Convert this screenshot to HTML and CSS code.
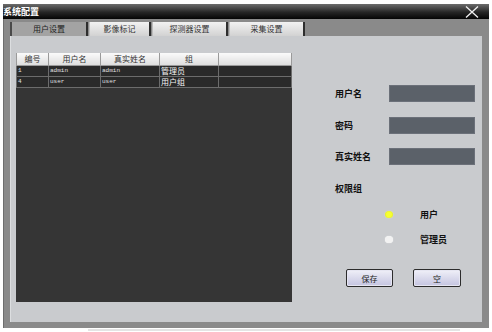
FILE: index.html
```html
<!DOCTYPE html>
<html lang="zh">
<head>
    <meta charset="UTF-8">
    <title>系统配置</title>
    <link rel="stylesheet" href="styles.css">
</head>
<body>
    <div class="window">
        <div class="titlebar">
            <span class="title">系统配置</span>
            <svg class="close" width="14" height="12" viewBox="0 0 14 12">
                <path d="M1 0.5 L13 11.5 M13 0.5 L1 11.5" stroke="#f2f2f2" stroke-width="1.3" fill="none"/>
            </svg>
        </div>
        <div class="frame">
            <div class="tabs">
                <div class="tab active">用户设置</div>
                <div class="tab">影像标记</div>
                <div class="tab">探测器设置</div>
                <div class="tab">采集设置</div>
            </div>
            <div class="panel">
                <div class="list">
                    <table id="user-table">
                        <thead>
                            <tr>
                                <th class="c-id">编号</th>
                                <th class="c-name">用户名</th>
                                <th class="c-real">真实姓名</th>
                                <th class="c-group">组</th>
                                <th></th>
                            </tr>
                        </thead>
                        <tbody>
                            <tr>
                                <td class="mono">1</td>
                                <td class="mono">admin</td>
                                <td class="mono">admin</td>
                                <td>管理员</td>
                                <td></td>
                            </tr>
                            <tr>
                                <td class="mono">4</td>
                                <td class="mono">user</td>
                                <td class="mono">user</td>
                                <td>用户组</td>
                                <td></td>
                            </tr>
                        </tbody>
                    </table>
                </div>
                <div class="form">
                    <div class="fields">
                        <label>用户名</label><div class="input"></div>
                        <label>密码</label><div class="input"></div>
                        <label>真实姓名</label><div class="input"></div>
                    </div>
                    <div class="group-label">权限组</div>
                    <div class="radio-row"><span class="dot on"></span><span class="radio-text">用户</span></div>
                    <div class="radio-row"><span class="dot"></span><span class="radio-text">管理员</span></div>
                    <div class="buttons">
                        <button class="btn">保存</button>
                        <button class="btn wide">空</button>
                    </div>
                </div>
            </div>
        </div>
    </div>
    <div class="shadow"></div>
</body>
</html>
```

FILE: styles.css
```css
body {
    margin: 0;
    background: #fff;
    font-family: "Noto Sans CJK SC", "Liberation Sans", sans-serif;
}
.window {
    margin: 4px 0 0 3px;
    width: 486px;
    height: 324px;
    display: flex;
    flex-direction: column;
}
.shadow {
    margin: 1px 0 0 88px;
    width: 372px;
    height: 2px;
    background: #e4e4e4;
}
.titlebar {
    height: 15px;
    background: linear-gradient(#6c6c6c, #262626 55%, #050505);
    display: flex;
    align-items: center;
    justify-content: space-between;
    padding: 0 10px 0 0;
}
.title {
    color: #fff;
    font-size: 9px;
    font-weight: bold;
    line-height: 15px;
}
.close {
    margin-top: 1px;
}
.frame {
    flex: 1;
    background: #8a8a8a;
    border-left: 1px solid #6e6e6e;
    padding: 3px 6px 6px 6px;
    display: flex;
    flex-direction: column;
}
.tabs {
    display: flex;
    height: 14px;
    gap: 1px;
}
.tab {
    font-size: 8px;
    line-height: 14px;
    color: #333;
    text-align: center;
    background: linear-gradient(#f2f2f2, #d2d2d2);
    border-right: 2px solid #2e2e2e;
    border-left: 1px solid #bcbcbc;
}
.tab:nth-child(1) { width: 74px; }
.tab:nth-child(2) { width: 59px; }
.tab:nth-child(3) { width: 73px; }
.tab:nth-child(4) { width: 73px; }
.tab.active {
    background: #a3a3a3;
    border-left: 2px solid #4a4a4a;
    color: #222;
}
.panel {
    width: 472px;
    height: 286px;
    box-sizing: border-box;
    background: #c9cbce;
    border-left: 1px solid #dcdee0;
    padding: 17px 0 0 5px;
    display: flex;
}
.list {
    width: 276px;
    height: 249px;
    background: #353535;
}
table {
    width: 100%;
    border-collapse: collapse;
}
th {
    height: 12px;
    padding: 0;
    font-size: 8px;
    font-weight: normal;
    line-height: 12px;
    color: #333;
    background: linear-gradient(#fafafa, #dedede);
    border: 1px solid #9a9a9a;
    border-top: none;
}
td {
    height: 10px;
    padding: 0 0 0 1px;
    font-size: 8px;
    line-height: 10px;
    color: #f4f4f4;
    background: #2a2a2a;
    border: 1px solid #6c6c6c;
    text-align: left;
    vertical-align: middle;
}
td.mono {
    font-family: "Liberation Mono", monospace;
    font-size: 6px;
    line-height: 10px;
    color: #e0e0e0;
}
.c-id { width: 31px; }
.c-name { width: 51px; }
.c-real { width: 58px; }
.c-group { width: 58px; }
.form {
    margin-left: 43px;
    display: flex;
    flex-direction: column;
}
.fields {
    margin-top: 32px;
    display: grid;
    grid-template-columns: 54px 86px;
    grid-auto-rows: 17px;
    row-gap: 14.5px;
    align-items: center;
}
.fields label,
.group-label,
.radio-text {
    font-size: 9px;
    font-weight: bold;
    color: #111;
}
.input {
    height: 17px;
    box-sizing: border-box;
    background: #5b6169;
    border: 1px solid #6b7079;
}
.group-label {
    margin-top: 18px;
    line-height: 12px;
}
.radio-row {
    display: flex;
    align-items: center;
    height: 12px;
    margin-top: 13px;
    padding-left: 50px;
}
.dot {
    width: 8px;
    height: 7px;
    border-radius: 50%;
    background: #f2f2f2;
    box-shadow: 0 0 1px #ffffff;
}
.dot.on {
    background: radial-gradient(circle, #f6ff30 45%, #d6e020);
    box-shadow: 0 0 1px #fbffb0;
}
.radio-text {
    margin-left: 27px;
}
.buttons {
    margin-top: 24px;
    padding-left: 11px;
    display: flex;
    gap: 20px;
}
.btn {
    width: 47px;
    height: 18px;
    padding: 0;
    font-family: inherit;
    font-size: 8px;
    color: #222;
    background: linear-gradient(#f0f0f8, #c4c4e0);
    border: 1px solid #2c2c2c;
    border-radius: 2px;
    box-shadow: inset 0 0 0 1px #e6e6f2;
}
.btn.wide {
    width: 48px;
}
```
